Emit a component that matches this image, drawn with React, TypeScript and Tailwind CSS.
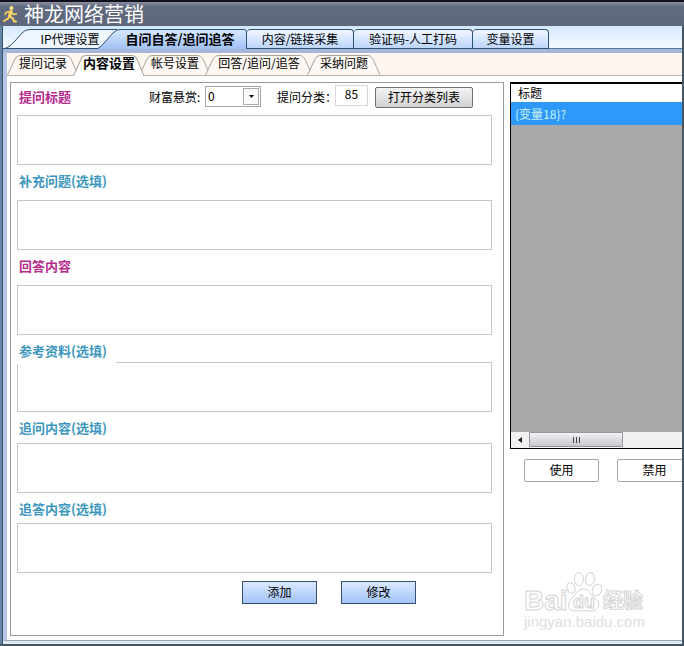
import clsx from 'clsx';

const MAIN_TABS = [
  { text: '内容/链接采集', width: 'w-[107px]' },
  { text: '验证码-人工打码', width: 'w-[119px]' },
  { text: '变量设置', width: 'w-[76px]' },
];

const SUB_TABS = [
  { text: '提问记录', width: 'w-[72px]', size: 72 },
  { text: '内容设置', width: 'w-[72px]', size: 72, active: true },
  { text: '帐号设置', width: 'w-[72px]', size: 72 },
  { text: '回答/追问/追答', width: 'w-[108px]', size: 108 },
  { text: '采纳问题', width: 'w-[74px]', size: 74 },
];

const FIELDS = [
  { id: 'detail', text: '补充问题(选填)', row: 'h-[35px]', color: 'text-[#3d97bd]' },
  { id: 'answer', text: '回答内容', row: 'h-[35px]', color: 'text-[#b52a8c]' },
  { id: 'reference', text: '参考资料(选填)', row: 'h-[27px]', color: 'text-[#3d97bd]', cover: true },
  { id: 'followup', text: '追问内容(选填)', row: 'h-[31px]', color: 'text-[#3d97bd]' },
  { id: 'reply', text: '追答内容(选填)', row: 'h-[30px]', color: 'text-[#3d97bd]' },
];

const TEXTAREA = 'block h-[50px] w-full resize-none border border-[#c6c6c6] bg-white p-1 outline-none';

function TitleBar() {
  return (
    <header className="flex h-[26px] items-center gap-1.5 border-t-2 border-[#10111d] bg-linear-to-b from-[#8c909f] via-[#626a7f] via-20% to-[#5f677c] pl-0.5">
      <svg viewBox="0 0 16 18" className="h-[18px] w-4" fill="none" stroke="#ffd65c" strokeLinecap="round" strokeLinejoin="round">
        <circle cx="9.5" cy="3" r="2" fill="#ffe383" stroke="none" />
        <path d="M9 6.5 7.5 11" strokeWidth="3.2" />
        <path d="M8.5 6.5 4 7.5 3 9.5M9.5 7l2 2.5 3-.5" strokeWidth="1.6" />
        <path d="M7.5 11.5 5.5 14 2 16M8 11.5l3 2 1 3h2" strokeWidth="2" />
      </svg>
      <h1 className="text-xl leading-6 text-white">神龙网络营销</h1>
    </header>
  );
}

function MainTabs() {
  return (
    <nav className="flex h-[27px] items-end overflow-hidden border-b-4 border-[#a3b8da] bg-linear-to-b from-[#d3e8fa] to-[#f8fbff] whitespace-nowrap">
      <button className="relative h-5 w-[114px] pl-5 text-center">
        <svg viewBox="0 0 114 20" className="absolute inset-0 h-5 w-[114px]">
          <path d="M0 19.5h2Q7 18 12 12L19 4Q22 .5 27 .5H114V19.5Z" fill="#eef5ff" stroke="#2d5272" />
        </svg>
        <span className="relative">IP代理设置</span>
      </button>
      <button className="relative -ml-5 h-5 w-[150px] pl-4 text-[13px] font-bold">
        <svg viewBox="0 0 150 20" className="absolute inset-0 h-5 w-[150px]">
          <defs>
            <linearGradient id="active" x1="0" y1="0" x2="0" y2="1">
              <stop offset="0" stopColor="#d9e9ff" />
              <stop offset="1" stopColor="#a1c1f5" />
            </linearGradient>
          </defs>
          <path d="M0 20Q4 18 8 13L16 4Q19 .5 23 .5H147Q149.5 .5 149.5 3V20" fill="url(#active)" stroke="#2d5272" />
        </svg>
        <span className="relative">自问自答/追问追答</span>
      </button>
      {MAIN_TABS.map((tab) => (
        <button
          key={tab.text}
          className={clsx(
            'h-5 rounded-t-sm border border-l-0 border-[#2d5272] bg-linear-to-b from-[#f1f7ff] to-[#bdd6fb]',
            tab.width,
          )}
        >
          {tab.text}
        </button>
      ))}
      <div className="h-px flex-1 bg-[#55789c]" />
    </nav>
  );
}

function SubTabs() {
  return (
    <nav className="flex h-[23px] items-end border-b border-[#b9b3ae] bg-[#fdf5ef] whitespace-nowrap">
      {SUB_TABS.map((tab, index) => (
        <button
          key={tab.text}
          className={clsx(
            'relative',
            tab.width,
            index > 0 && '-ml-1.5',
            tab.active ? 'z-10 -mb-px h-[21px] pb-1.5 text-[13px] leading-4 font-bold' : 'h-5 pb-1 text-xs',
          )}
        >
          <svg viewBox={`0 0 ${tab.size} 20`} preserveAspectRatio="none" className="absolute inset-0 h-full w-full">
            <path
              d={`M.5 20 8 4Q9.5 .5 13 .5H${tab.size - 13}Q${tab.size - 10} .5 ${tab.size - 8} 4L${tab.size - 1} 20`}
              fill={tab.active ? '#fff' : '#fdf8f3'}
              stroke="#aaa49f"
            />
          </svg>
          <span className="relative">{tab.text}</span>
        </button>
      ))}
    </nav>
  );
}

function QuestionForm() {
  return (
    <form className="flex min-w-0 flex-col border border-[#999] pr-[11px] pl-1.5">
      <div className="flex h-8 items-start whitespace-nowrap">
        <label htmlFor="title" className="w-[132px] pt-1 pl-0.5 text-[13px] leading-5 font-bold text-[#b52a8c]">
          提问标题
        </label>
        <label htmlFor="reward" className="w-14 pt-1 leading-5">
          财富悬赏:
        </label>
        <div className="relative mt-[3px] h-[21px] w-14">
          <select id="reward" className="block h-full w-full appearance-none border border-[#a5a5a5] bg-white pb-0.5 pl-0.5 leading-4">
            <option>0</option>
          </select>
          <span className="pointer-events-none absolute inset-y-0.5 right-0.5 flex w-4 items-center justify-center border border-[#aaa] bg-[#fafafa]">
            <svg viewBox="0 0 5 3" className="h-[3px] w-[5px]">
              <path d="M0 0h5L2.5 3Z" />
            </svg>
          </span>
        </div>
        <label htmlFor="category" className="w-[74px] pt-1 pl-4 leading-5">
          提问分类：
        </label>
        <input id="category" defaultValue="85" className="mt-0.5 h-[21px] w-[33px] border border-[#d8d8d8] bg-white pb-1 text-center" />
        <button type="button" className="mt-1 ml-[7px] h-[21px] w-[98px] rounded-xs border border-[#707070] bg-linear-to-b from-[#f5f5f5] to-[#d2d2d2] pb-0.5 leading-4">
          打开分类列表
        </button>
      </div>
      <textarea id="title" className={TEXTAREA} />
      {FIELDS.map((field) => (
        <div key={field.id}>
          <div className={clsx('pt-1.5', field.row)}>
            <label
              htmlFor={field.id}
              className={clsx(
                'block w-[99px] pl-0.5 text-[13px] leading-5 font-bold whitespace-nowrap',
                field.color,
                field.cover && 'relative bg-white pb-[3px]',
              )}
            >
              {field.text}
            </label>
          </div>
          <textarea id={field.id} className={TEXTAREA} />
        </div>
      ))}
      <div className="flex gap-6 pt-2 pb-[31px] pl-[225px]">
        {['添加', '修改'].map((text) => (
          <button
            key={text}
            type="button"
            className="h-[23px] w-[75px] border border-[#35516b] bg-linear-to-b from-[#dbe9ff] to-[#a2c3f5] pb-0.5"
          >
            {text}
          </button>
        ))}
      </div>
    </form>
  );
}

function Watermark() {
  return (
    <div className="ml-3.5 w-[126px] text-[#dedede]">
      <svg viewBox="0 0 126 46" className="block h-[46px] w-[126px] overflow-visible" fill="#fff" stroke="#d3d3d3">
        <text x="0" y="42" fontSize="28" fontWeight="700" fontFamily="Liberation Sans, sans-serif">
          Bai
        </text>
        <ellipse cx="47" cy="20" rx="4" ry="5.5" transform="rotate(-20 47 20)" />
        <ellipse cx="55" cy="11" rx="4.5" ry="6.5" />
        <ellipse cx="66" cy="11" rx="4.5" ry="6.5" transform="rotate(10 66 11)" />
        <ellipse cx="73" cy="22" rx="4.5" ry="6" transform="rotate(20 73 22)" />
        <path d="M59 21c-6 0-7 6-11 9-5 4-5 13 3 13 5 0 10-1 15 0 9 1 11-8 6-12-5-4-7-10-13-10Z" />
        <text x="49" y="40" fontSize="18" fontWeight="700" fontFamily="Liberation Sans, sans-serif">
          du
        </text>
        <text x="79" y="40" fontSize="20" fontWeight="700" fontFamily="Noto Sans CJK SC, sans-serif">
          经验
        </text>
      </svg>
      <p className="text-[15px] leading-4 whitespace-nowrap font-['Liberation_Sans',sans-serif]">jingyan.baidu.com</p>
    </div>
  );
}

function VariableList() {
  return (
    <aside className="flex min-w-0 flex-col overflow-hidden">
      <div className="flex h-[367px] flex-col border border-r-0 border-t-2 border-black bg-[#aaa8aa]">
        <table className="w-full text-left">
          <thead>
            <tr className="h-[18px] bg-white">
              <th className="p-0 pl-[7px] leading-[18px] font-normal">标题</th>
            </tr>
          </thead>
          <tbody>
            <tr className="h-[23px] bg-[#2e98fb] text-[#c9f3ef]">
              <td className="p-0 pl-1 leading-[23px]">{'{变量18}?'}</td>
            </tr>
          </tbody>
        </table>
        <div className="mt-auto flex h-4 bg-[#f3f0f4]">
          <span className="flex w-[18px] items-center justify-center">
            <svg viewBox="0 0 4 6" className="h-1.5 w-1">
              <path d="M4 0v6L0 3Z" fill="#222" />
            </svg>
          </span>
          <span className="flex h-[15px] w-[94px] items-center justify-center gap-0.5 border border-[#98979c] bg-linear-to-b from-[#f2f1f4] to-[#cac8cf]">
            <i className="h-1.5 w-px bg-[#444]" />
            <i className="h-1.5 w-px bg-[#444]" />
            <i className="h-1.5 w-px bg-[#444]" />
          </span>
        </div>
      </div>
      <div className="flex gap-[18px] pt-2.5 pl-3.5">
        {['使用', '禁用'].map((text) => (
          <button key={text} className="h-[23px] w-[75px] shrink-0 rounded-xs border border-[#a5a5a5] bg-white pb-0.5">
            {text}
          </button>
        ))}
      </div>
      <div className="mt-auto pb-1.5">
        <Watermark />
      </div>
    </aside>
  );
}

export default function App() {
  return (
    <div className="flex min-h-screen flex-col overflow-hidden bg-white font-['Noto_Sans_CJK_SC',sans-serif] text-xs text-black">
      <TitleBar />
      <div className="flex flex-1 border-r-2 border-b-2 border-[#465763]">
        <div className="w-[3px] shrink-0 border-r border-[#38536c] bg-[#6684a5]" />
        <div className="flex min-w-0 flex-1 flex-col border-b-[3px] border-[#deebf3]">
          <MainTabs />
          <div className="flex flex-1 flex-col border-b border-l-4 border-b-[#9aa7b1] border-l-[#b4c8e6]">
            <SubTabs />
            <main className="grid flex-1 grid-cols-[494fr_172fr] gap-1.5 pt-1.5 pb-1 pl-[3px]">
              <QuestionForm />
              <VariableList />
            </main>
          </div>
        </div>
      </div>
    </div>
  );
}
